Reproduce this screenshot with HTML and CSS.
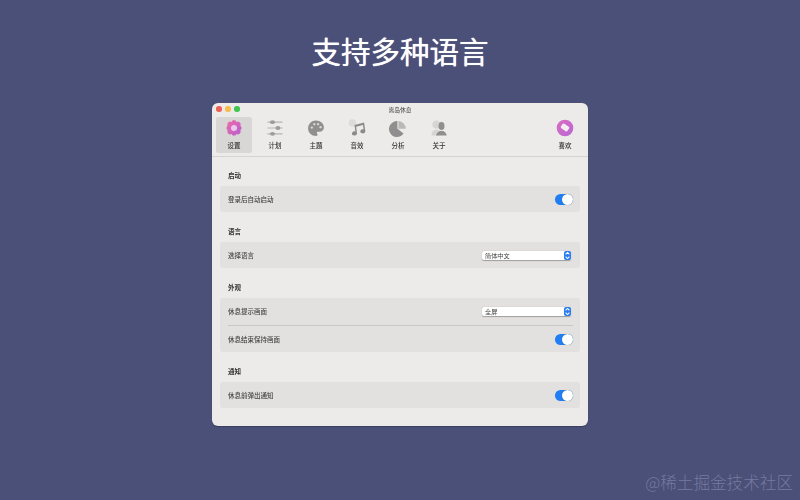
FILE: index.html
```html
<!DOCTYPE html>
<html lang="zh-CN">
<head>
<meta charset="utf-8">
<title>支持多种语言</title>
<link rel="stylesheet" href="styles.css">
</head>
<body>
<h1 class="headline">支持多种语言</h1>
<main class="window">
  <div class="titlebar">
    <div class="lights"><i class="light red"></i><i class="light yellow"></i><i class="light green"></i></div>
    <div class="wintitle">离岛休息</div>
  </div>
  <nav class="toolbar">
    <div class="tool active">
      <svg class="icon" viewBox="0 0 24 24"><defs><linearGradient id="g1" x1="0" y1="0" x2="1" y2="1"><stop offset="0" stop-color="#f06aa2"/><stop offset="1" stop-color="#b560d4"/></linearGradient></defs><path fill="url(#g1)" d="M12 2.500a3.200 3.200 0 0 1 3 2.200 3.200 3.200 0 0 1 4 .6 3.200 3.200 0 0 1 .6 4 3.200 3.200 0 0 1 0 5.400 3.200 3.200 0 0 1-.6 4 3.200 3.200 0 0 1-4 .6 3.200 3.200 0 0 1-6 0 3.200 3.200 0 0 1-4-.6 3.200 3.200 0 0 1-.6-4 3.200 3.200 0 0 1 0-5.400 3.200 3.200 0 0 1 .6-4 3.200 3.200 0 0 1 4-.6A3.200 3.200 0 0 1 12 2.500z"/><circle cx="12" cy="12" r="3.600" fill="#e9c9ee"/></svg>
      <span class="tool-label">设置</span>
    </div>
    <div class="tool">
      <svg class="icon" viewBox="0 0 24 24"><g stroke="#b5b5b5" stroke-width="1.400"><path d="M3 5h18M3 12h18M3 19h18"/></g><g fill="#9c9c9c"><ellipse cx="9" cy="5" rx="3" ry="2.300"/><ellipse cx="15.500" cy="12" rx="3" ry="2.300"/><ellipse cx="9" cy="19" rx="3" ry="2.300"/></g></svg>
      <span class="tool-label">计划</span>
    </div>
    <div class="tool">
      <svg class="icon" viewBox="0 0 24 24"><path fill="#8f8f8f" fill-rule="evenodd" d="M12 3c5.200 0 9.500 3.700 9.500 8.300 0 3-2.400 5.200-5.300 5.200h-1.700c-.9 0-1.500.7-1.500 1.400 0 .4.200.7.400 1 .3.400.5.800.5 1.200 0 .9-.7 1.400-1.800 1.400-5.400 0-9.600-4-9.600-9C2.500 7 6.700 3 12 3z"/><g fill="#d9d8d6"><circle cx="7" cy="11.500" r="1.400"/><circle cx="10" cy="7.500" r="1.400"/><circle cx="14.500" cy="7.500" r="1.400"/><circle cx="17.500" cy="11" r="1.400"/></g></svg>
      <span class="tool-label">主题</span>
    </div>
    <div class="tool">
      <svg class="icon" viewBox="0 0 24 24"><circle cx="6.500" cy="6" r="4.500" fill="#dcdbd9"/><path fill="#8a8a8a" d="M9 8.500 20.500 5.500l1.500 10.500a3 2.500 0 1 1-2-2.400L19 8.500l-8 2 1 8a3 2.500 0 1 1-2-2.400z"/></svg>
      <span class="tool-label">音效</span>
    </div>
    <div class="tool">
      <svg class="icon" viewBox="0 0 24 24"><path fill="#8f8f8f" d="M11.300 3.700v9.100l7.400 5.900A9.600 9.600 0 1 1 11.300 3.700z"/><path fill="#b8b8b8" d="M12.500 3.700a9.600 9.600 0 0 1 9 9.100h-9z"/></svg>
      <span class="tool-label">分析</span>
    </div>
    <div class="tool">
      <svg class="icon" viewBox="0 0 24 24"><g fill="#d6d5d3"><circle cx="9" cy="8" r="5"/><path d="M3 21c0-5 2.500-7 6-7s5 2 5 7z"/></g><g fill="#8f8f8f"><ellipse cx="15" cy="9.500" rx="3.600" ry="4.800"/><path d="M8.500 21c.2-3 2.500-4.500 4.500-5.500h4c2 1 4 2.500 4.200 5.500z"/></g></svg>
      <span class="tool-label">关于</span>
    </div>
    <div class="tool tool-end">
      <svg class="icon" viewBox="0 0 24 24"><defs><linearGradient id="g2" x1="0" y1="0" x2="1" y2="1"><stop offset="0" stop-color="#d96dc0"/><stop offset="1" stop-color="#b868d6"/></linearGradient></defs><circle cx="12" cy="12" r="10" fill="url(#g2)"/><rect x="7.500" y="8" width="9.500" height="6.500" rx="1.600" transform="rotate(35 12 11)" fill="#f6edf6"/></svg>
      <span class="tool-label">喜欢</span>
    </div>
  </nav>
  <div class="content">
    <section class="section">
      <h2 class="section-title">启动</h2>
      <div class="group">
        <div class="row"><span class="row-label">登录后自动启动</span><span class="switch"></span></div>
      </div>
    </section>
    <section class="section">
      <h2 class="section-title">语言</h2>
      <div class="group">
        <div class="row"><span class="row-label">选择语言</span><span class="select"><span class="select-text">简体中文</span><span class="stepper"><svg viewBox="0 0 6 8"><path d="M1.300 3 3 1.300 4.700 3M1.300 5 3 6.700 4.700 5" fill="none" stroke="#fff" stroke-width=".9"/></svg></span></span></div>
      </div>
    </section>
    <section class="section">
      <h2 class="section-title">外观</h2>
      <div class="group">
        <div class="row"><span class="row-label">休息提示画面</span><span class="select"><span class="select-text">全屏</span><span class="stepper"><svg viewBox="0 0 6 8"><path d="M1.300 3 3 1.300 4.700 3M1.300 5 3 6.700 4.700 5" fill="none" stroke="#fff" stroke-width=".9"/></svg></span></span></div>
        <div class="divider"></div>
        <div class="row"><span class="row-label">休息结束保持画面</span><span class="switch"></span></div>
      </div>
    </section>
    <section class="section">
      <h2 class="section-title">通知</h2>
      <div class="group">
        <div class="row"><span class="row-label">休息前弹出通知</span><span class="switch"></span></div>
      </div>
    </section>
  </div>
</main>
<div class="watermark">@稀土掘金技术社区</div>
</body>
</html>
```
FILE: styles.css
```css
* { box-sizing: border-box; }
body {
  margin: 0;
  height: 500px;
  overflow: hidden;
  background: #4b5079;
  display: flex;
  flex-direction: column;
  align-items: center;
  font-family: "Noto Sans CJK SC", "Liberation Sans", sans-serif;
  position: relative;
}
.headline {
  margin: 29px 0 0;
  height: 42px;
  line-height: 42px;
  font-size: 29.500px;
  font-weight: 400;
  color: #fff;
  text-shadow: 0 0 .7px #fff;
}
.window {
  margin: 32px 0 0;
  width: 376px;
  height: 323px;
  border-radius: 6px;
  background: #ecebe9;
  box-shadow: 0 1px 1px rgba(30, 30, 50, .35);
  overflow: hidden;
  color: #2e2e2e;
  filter: blur(.35px);
}
.titlebar {
  position: relative;
  height: 14px;
  display: flex;
  align-items: center;
  justify-content: center;
}
.lights { position: absolute; left: 4px; top: 3px; display: flex; gap: 3.500px; }
.light { width: 5.500px; height: 5.500px; border-radius: 50%; }
.red { background: #ec5f57; }
.yellow { background: #f4bd4f; }
.green { background: #3fc550; }
.wintitle { font-size: 5.800px; line-height: 12px; color: #3a3a3a; margin-top: -1px; }
.toolbar {
  height: 40px;
  padding: 0 5px 0 4px;
  display: flex;
  gap: 5px;
  border-bottom: 1px solid #d5d4d2;
}
.tool {
  width: 36px;
  height: 36px;
  border-radius: 2px;
  display: flex;
  flex-direction: column;
  align-items: center;
}
.tool.active { background: #d8d7d5; }
.tool-end { margin-left: auto; }
.icon { width: 20px; height: 20px; margin-top: 1px; display: block; }
.tool-label { font-size: 6.500px; line-height: 9px; margin-top: 3px; font-weight: 500; color: #333; }
.content { padding: 13px 8px 0; display: flex; flex-direction: column; gap: 14px; }
.section-title { margin: 0 0 6px; padding-left: 8px; font-size: 6.500px; line-height: 10px; font-weight: 700; color: #333; }
.group { background: #e2e1df; border-radius: 3px; padding: 0 7px 0 8px; }
.row { height: 26px; display: flex; align-items: center; justify-content: space-between; }
.divider { height: 1px; margin-top: 1px; background: #c8c7c5; }
.row-label { font-size: 6.500px; line-height: 10px; color: #444; font-weight: 500; }
.switch {
  position: relative;
  width: 18px;
  height: 11px;
  border-radius: 6px;
  background: #1f7ef2;
}
.switch::after {
  content: "";
  position: absolute;
  right: 0;
  top: 0;
  width: 11px;
  height: 11px;
  border-radius: 50%;
  background: #fff;
  box-shadow: 0 0 1px rgba(0, 0, 0, .4);
}
.select {
  width: 89px;
  height: 9px;
  margin-right: 2px;
  background: #fff;
  border-radius: 2px;
  box-shadow: 0 .5px 1px rgba(0, 0, 0, .3);
  display: flex;
  align-items: center;
  justify-content: space-between;
  padding-left: 3px;
}
.select-text { font-size: 6.200px; line-height: 9px; color: #444; }
.stepper {
  width: 7px;
  height: 9px;
  background: #2a7df0;
  border-radius: 2px;
  display: flex;
}
.stepper svg { width: 7px; height: 9px; display: block; }
.watermark {
  position: absolute;
  right: 7px;
  bottom: 6px;
  font-size: 16.600px;
  line-height: 24px;
  font-weight: 300;
  color: rgba(170, 175, 205, .45);
}
```
